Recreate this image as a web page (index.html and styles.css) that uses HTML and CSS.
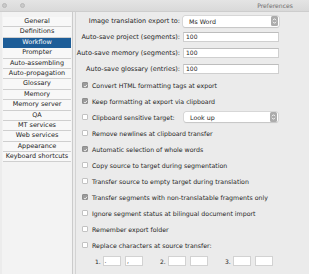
FILE: index.html
```html
<!DOCTYPE html>
<html>
<head>
<meta charset="utf-8">
<link rel="stylesheet" href="styles.css">
</head>
<body>
<div class="window">
  <div class="titlebar">
    <span class="lights"><i class="light"></i><i class="light"></i></span>
    <span class="title">Preferences</span>
  </div>
  <div class="main">
    <nav class="sidebar">
      <ul class="nav">
        <li class="nav-item">General</li>
        <li class="nav-item">Definitions</li>
        <li class="nav-item selected">Workflow</li>
        <li class="nav-item">Prompter</li>
        <li class="nav-item">Auto-assembling</li>
        <li class="nav-item">Auto-propagation</li>
        <li class="nav-item">Glossary</li>
        <li class="nav-item">Memory</li>
        <li class="nav-item">Memory server</li>
        <li class="nav-item">QA</li>
        <li class="nav-item">MT services</li>
        <li class="nav-item">Web services</li>
        <li class="nav-item">Appearance</li>
        <li class="nav-item">Keyboard shortcuts</li>
      </ul>
    </nav>
    <section class="content">
      <div class="form">
        <span class="lbl">Image translation export to:</span>
        <div class="select"><span class="select-text">Ms Word</span><svg class="stepper" width="7" height="10" viewBox="0 0 7 10"><rect x="0" y="0" width="7" height="10" rx="1.5" fill="#acacac"/><path d="M2 4.2 L3.5 2.7 L5 4.2 M2 5.8 L3.5 7.3 L5 5.8" stroke="#fff" stroke-width="0.9" fill="none"/></svg></div>
        <span class="lbl">Auto-save project (segments):</span>
        <div class="field">100</div>
        <span class="lbl">Auto-save memory (segments):</span>
        <div class="field">100</div>
        <span class="lbl">Auto-save glossary (entries):</span>
        <div class="field">100</div>
      </div>
      <div class="row"><span class="box on"><svg width="6" height="6" viewBox="0 0 6 6"><path d="M1.2 3.1 L2.5 4.4 L4.9 1.5" stroke="#fff" stroke-width="1" fill="none"/></svg></span><span class="text">Convert HTML formatting tags at export</span></div>
      <div class="row"><span class="box on"><svg width="6" height="6" viewBox="0 0 6 6"><path d="M1.2 3.1 L2.5 4.4 L4.9 1.5" stroke="#fff" stroke-width="1" fill="none"/></svg></span><span class="text">Keep formatting at export via clipboard</span></div>
      <div class="row"><span class="box"></span><span class="text text-fixed">Clipboard sensitive target:</span><div class="select select-sm"><span class="select-text">Look up</span><svg class="stepper" width="7" height="10" viewBox="0 0 7 10"><rect x="0" y="0" width="7" height="10" rx="1.5" fill="#acacac"/><path d="M2 4.2 L3.5 2.7 L5 4.2 M2 5.8 L3.5 7.3 L5 5.8" stroke="#fff" stroke-width="0.9" fill="none"/></svg></div></div>
      <div class="row"><span class="box"></span><span class="text">Remove newlines at clipboard transfer</span></div>
      <div class="row"><span class="box on"><svg width="6" height="6" viewBox="0 0 6 6"><path d="M1.2 3.1 L2.5 4.4 L4.9 1.5" stroke="#fff" stroke-width="1" fill="none"/></svg></span><span class="text">Automatic selection of whole words</span></div>
      <div class="row"><span class="box"></span><span class="text">Copy source to target during segmentation</span></div>
      <div class="row"><span class="box"></span><span class="text">Transfer source to empty target during translation</span></div>
      <div class="row"><span class="box on"><svg width="6" height="6" viewBox="0 0 6 6"><path d="M1.2 3.1 L2.5 4.4 L4.9 1.5" stroke="#fff" stroke-width="1" fill="none"/></svg></span><span class="text">Transfer segments with non-translatable fragments only</span></div>
      <div class="row"><span class="box"></span><span class="text">Ignore segment status at bilingual document import</span></div>
      <div class="row"><span class="box"></span><span class="text">Remember export folder</span></div>
      <div class="row"><span class="box"></span><span class="text">Replace characters at source transfer:</span></div>
      <div class="pairs">
        <div class="pair"><span class="num">1.</span><span class="mini">.</span><span class="mini">,</span></div>
        <div class="pair"><span class="num">2.</span><span class="mini"></span><span class="mini"></span></div>
        <div class="pair"><span class="num">3.</span><span class="mini"></span><span class="mini"></span></div>
      </div>
    </section>
  </div>
</div>
</body>
</html>
```
FILE: styles.css
```css
* { box-sizing: border-box; }
html, body { margin: 0; padding: 0; }
body {
  width: 309px;
  height: 274px;
  overflow: hidden;
  background: #ececec;
  font-family: "DejaVu Sans", Verdana, sans-serif;
  color: #262626;
}
.window { width: 309px; height: 274px; display: flex; flex-direction: column; }
.titlebar {
  height: 12px;
  flex: none;
  display: flex;
  align-items: center;
  background: linear-gradient(#e4e4e4, #d9d9d9);
  border-bottom: 1px solid #cdcdcd;
}
.lights { display: flex; gap: 13px; padding-left: 2px; }
.light {
  display: block;
  width: 5px; height: 5px;
  border-radius: 50%;
  background: #c9c9c9;
  border: 0.5px solid #b8b8b8;
}
.title {
  margin-left: auto;
  padding-right: 16px;
  font-size: 6.1px;
  color: #6e6e6e;
}
.main { flex: 1; display: flex; min-height: 0; }
.sidebar {
  width: 71px;
  margin-left: 2px;
  margin-right: 2px;
  background: #f3f3f3;
  border-right: 1px solid #cbcbcb;
  padding-top: 5px;
}
.nav { list-style: none; margin: 0; padding: 0 1px 0 1px; }
.nav-item {
  height: 10.4px;
  line-height: 9.4px;
  border-bottom: 1px solid #cfcfcf;
  text-align: center;
  font-size: 6.45px;
  color: #1e1e1e;
  background: #f8f8f8;
  white-space: nowrap;
}
.nav-item.selected { background: #1d5d98; color: #fff; border-bottom-color: #1d5d98; }
.content {
  flex: 1;
  border-left: 1px solid #d3d3d3;
  background: #ebebeb;
  padding-top: 1px;
  font-size: 6.25px;
}
.form {
  display: grid;
  grid-template-columns: 104px 96px;
  column-gap: 3px;
  grid-auto-rows: 16px;
  align-items: center;
}
.lbl { text-align: right; white-space: nowrap; font-size: 6.5px; }
.field {
  height: 10px;
  background: #fff;
  border: 1px solid #cfcfcf;
  border-top-color: #bdbdbd;
  padding-left: 2px;
  line-height: 8px;
  font-size: 6px;
}
.select {
  height: 11px;
  background: #fff;
  border-radius: 2px;
  box-shadow: 0 0 0 0.5px #c6c6c6, 0 0.5px 1px rgba(0,0,0,0.15);
  display: flex;
  align-items: center;
  padding: 0 1px 0 6px;
}
.select-text { flex: 1; font-size: 6.3px; }
.stepper { display: block; }
.row { height: 16px; display: flex; align-items: center; padding-left: 6px; white-space: nowrap; }
.box {
  width: 6px; height: 6px;
  flex: none;
  background: #fff;
  border: 0.5px solid #c2c2c2;
  border-radius: 1px;
  margin-right: 4px;
  display: flex;
}
.box.on { background: #9c9c9c; border-color: #8e8e8e; }
.box svg { display: block; margin: -0.5px; }
.text-fixed { width: 92px; }
.select-sm { width: 94px; height: 10px; }
.pairs { height: 16px; display: flex; align-items: center; gap: 17px; padding-left: 19px; }
.pair { display: flex; align-items: center; gap: 4.5px; }
.num { width: 4px; margin-right: -1px; font-size: 6px; }
.mini {
  width: 18px; height: 10px;
  background: #fff;
  border: 1px solid #d2d2d2;
  font-size: 6px;
  line-height: 7px;
  padding-left: 1px;
}
```
